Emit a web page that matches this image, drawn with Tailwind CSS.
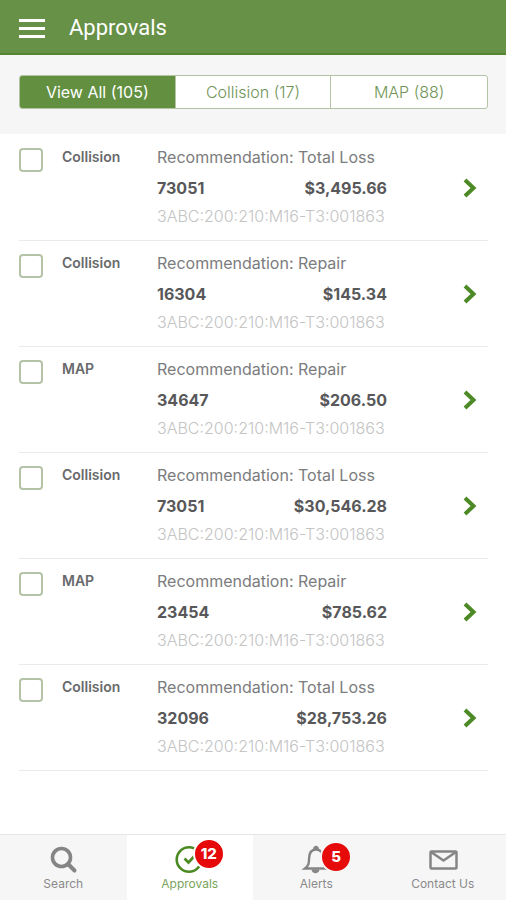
<!DOCTYPE html>
<html lang="en">
<head>
<meta charset="utf-8">
<meta name="viewport" content="width=device-width, initial-scale=1">
<title>Approvals</title>
<script src="https://cdn.jsdelivr.net/npm/@tailwindcss/browser@4"></script>
</head>
<body class="flex min-h-screen flex-col bg-white font-['Inter',sans-serif] text-[#68696b]">
  <header class="flex h-[55px] items-center gap-6 border-b-2 border-[#558733] bg-[#679146] px-[19px] pt-[3px] text-white">
    <button type="button" aria-label="Menu" class="flex w-[26px] flex-col gap-[5px]">
      <span class="h-[3px] w-full bg-white"></span>
      <span class="h-[3px] w-full bg-white"></span>
      <span class="h-[3px] w-full bg-white"></span>
    </button>
    <h1 class="font-['Roboto',sans-serif] text-[22px] leading-7">Approvals</h1>
  </header>

  <section class="bg-[#f6f6f6] px-[18px] pt-5 pb-[25px] pl-[19px]">
    <div class="grid h-[34px] grid-cols-3 divide-x divide-[#b5c4a6] overflow-hidden rounded-[3px] border border-[#b5c4a6] bg-white text-base text-[#6f9455]">
      <button type="button" class="bg-[#629040] text-white">View All (105)</button>
      <button type="button" class="font-light">Collision (17)</button>
      <button type="button" class="font-light">MAP (88)</button>
    </div>
  </section>

  <main class="flex-1 pt-px pr-[18px] pl-[19px]">
    <ul id="list"></ul>
  </main>

  <nav class="grid h-[66px] grid-cols-4 border-t border-[#e6e6e6] bg-[#f6f6f6] text-xs text-[#8a8a8a]">
    <a href="#search" class="flex flex-col items-center pt-2.5">
      <svg class="h-[30px] w-[30px]" viewBox="0 0 30 30" fill="none" stroke="#858585"><circle cx="13.5" cy="12.500" r="9" stroke-width="3.6"/><path d="M20 19l6.500 6.500" stroke-width="4" stroke-linecap="round"/></svg>
      <span class="leading-[18px]">Search</span>
    </a>
    <a href="#approvals" class="flex flex-col items-center bg-white pt-2.5 text-[#7ba35c]">
      <span class="relative h-[30px] w-[30px]">
        <svg class="h-[30px] w-[30px]" viewBox="0 0 30 30" fill="none" stroke="#4b8a22" stroke-width="2.6"><circle cx="14" cy="14.500" r="12.300"/><path d="M9.500 13.500l4 4 6-6.500" stroke-width="2.600"/></svg>
        <span class="absolute -top-[7px] left-[18px] flex h-8 w-8 items-center justify-center rounded-full border-2 border-white bg-[#e60a0a] text-[15px] font-extrabold text-white">12</span>
      </span>
      <span class="leading-[18px]">Approvals</span>
    </a>
    <a href="#alerts" class="flex flex-col items-center pt-2.5">
      <span class="relative h-[30px] w-[30px]">
        <svg class="h-[30px] w-[30px]" viewBox="0 0 30 30" fill="none" stroke="#858585" stroke-width="2.400"><path d="M4 23.500c4-3 4-6 4-9.500 0-6 2.500-9.500 7-9.500s7 3.500 7 9.500c0 3.500 0 6.500 4 9.500z"/><path d="M10.500 24.500h8c-.5 5-7.500 5-8 0zM12 4.500c0-5 6-5 6 0z" fill="#858585" stroke="none"/></svg>
        <span class="absolute -top-[4px] left-[19px] flex h-8 w-8 items-center justify-center rounded-full border-2 border-[#f6f6f6] bg-[#e60a0a] text-[15px] font-extrabold text-white">5</span>
      </span>
      <span class="leading-[18px]">Alerts</span>
    </a>
    <a href="#contact" class="flex flex-col items-center pt-2.5">
      <svg class="h-[30px] w-[30px]" viewBox="0 0 30 30" fill="none" stroke="#858585" stroke-width="2.500"><rect x="2.500" y="6.500" width="26" height="17" rx="1"/><path d="M3 7l12.500 8.500L28 7"/></svg>
      <span class="leading-[18px]">Contact Us</span>
    </a>
  </nav>

  <template id="row">
    <li class="flex border-b border-[#ebebeb] pt-2.5 pb-3">
      <input type="checkbox" class="mt-[3px] h-6 w-6 shrink-0 appearance-none rounded-[4px] border-2 border-[#b4c3a6] bg-white checked:bg-[#629040]">
      <label class="ml-[19px] w-[95px] shrink-0 text-sm leading-6 font-semibold"></label>
      <div class="w-[230px] shrink-0 whitespace-nowrap">
        <p data-rec class="text-base leading-6 font-normal text-[#7b7c7e]"></p>
        <p class="mt-[7px] flex justify-between text-base leading-6 font-bold text-[#58585a]"><span data-num></span><span data-amt></span></p>
        <p class="mt-1 text-base leading-6 font-light text-[#c4c4c4]">3ABC:200:210:M16-T3:001863</p>
      </div>
      <button type="button" aria-label="Open" class="mt-[33px] mr-[11px] ml-auto h-5 w-[14px]">
        <svg class="h-5 w-[14px]" viewBox="0 0 14 20" fill="none" stroke="#4d8a25" stroke-width="4"><path d="M2 2l8.500 8L2 18"/></svg>
      </button>
    </li>
  </template>
  <script>
    const items = [
      ['Collision', 'Total Loss', '73051', '$3,495.66'],
      ['Collision', 'Repair', '16304', '$145.34'],
      ['MAP', 'Repair', '34647', '$206.50'],
      ['Collision', 'Total Loss', '73051', '$30,546.28'],
      ['MAP', 'Repair', '23454', '$785.62'],
      ['Collision', 'Total Loss', '32096', '$28,753.26'],
    ];
    const list = document.getElementById('list');
    items.forEach(([type, rec, num, amt], i) => {
      const row = document.getElementById('row').content.cloneNode(true);
      row.querySelector('input').id = 'item' + i;
      const label = row.querySelector('label');
      label.htmlFor = 'item' + i;
      label.textContent = type;
      row.querySelector('[data-rec]').textContent = 'Recommendation: ' + rec;
      row.querySelector('[data-num]').textContent = num;
      row.querySelector('[data-amt]').textContent = amt;
      list.append(row);
    });
  </script>
</body>
</html>
